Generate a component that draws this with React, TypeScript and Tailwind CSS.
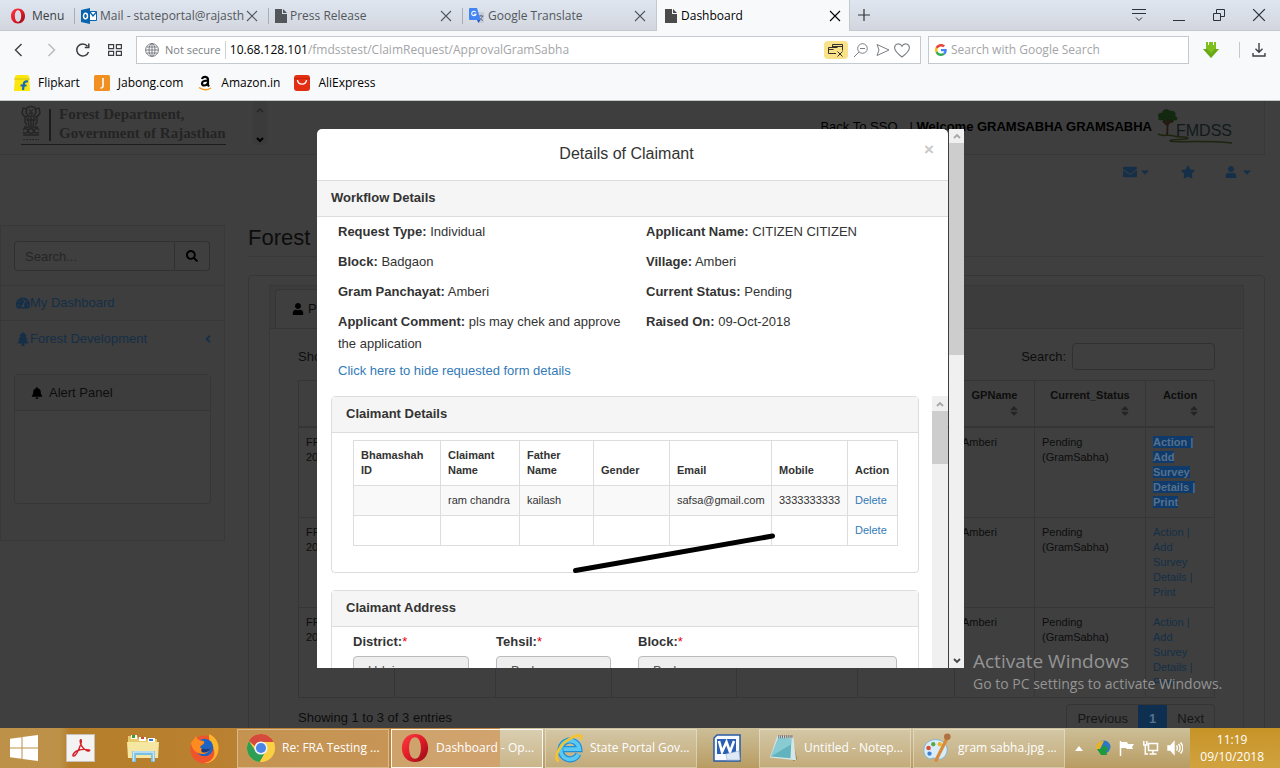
import React from "react";
import {
  FaSearch,
  FaTachometerAlt,
  FaTree,
  FaBell,
  FaUser,
  FaEnvelope,
  FaStar,
  FaCaretDown,
  FaAngleLeft,
  FaSort,
} from "react-icons/fa";

const uiFont = "font-['Open_Sans','Noto_Sans',sans-serif]";
const pageFont = "font-['Liberation_Sans',Arial,sans-serif]";

/* ---------- small drawings ---------- */

function OperaLogo({ className }: { className: string }) {
  return (
    <svg viewBox="0 0 32 32" className={className} aria-hidden="true">
      <defs>
        <linearGradient id="opera" x1="0" y1="0" x2="1" y2="1">
          <stop offset="0" stopColor="#ff3b42" />
          <stop offset="0.5" stopColor="#e01b28" />
          <stop offset="1" stopColor="#8e0a15" />
        </linearGradient>
      </defs>
      <path
        fill="url(#opera)"
        fillRule="evenodd"
        d="M16 1C7.500 1 2 7.500 2 16s5.500 15 14 15 14-6.500 14-15S24.500 1 16 1Zm0 3.500c4 0 6.300 5 6.300 11.500S20 27.500 16 27.500 9.700 22.500 9.700 16 12 4.500 16 4.500Z"
      />
    </svg>
  );
}

function PageIcon({ className }: { className: string }) {
  return (
    <svg viewBox="0 0 12 14" className={className} aria-hidden="true">
      <path fill="currentColor" d="M0 0h7v5h5v9H0zM8 0l4 4H8z" />
    </svg>
  );
}

function Cross({ className }: { className: string }) {
  return (
    <svg viewBox="0 0 12 12" className={className} aria-hidden="true">
      <path d="M1 1l10 10M11 1L1 11" stroke="currentColor" strokeWidth="1.100" fill="none" />
    </svg>
  );
}

function OutlookIcon() {
  return (
    <svg viewBox="0 0 16 16" className="size-4 shrink-0" aria-hidden="true">
      <path fill="#fff" stroke="#0a64ad" d="M8.500 3.500h7v9h-7z" />
      <path d="M9 4l3 4 3.500-4" stroke="#0a64ad" strokeWidth="1.400" fill="none" />
      <path fill="#0a64ad" d="M0 2l9-2v16l-9-2z" />
      <ellipse cx="4.500" cy="8" rx="2" ry="2.700" fill="none" stroke="#fff" strokeWidth="1.400" />
    </svg>
  );
}

function TranslateIcon() {
  return (
    <svg viewBox="0 0 16 16" className="size-4 shrink-0" aria-hidden="true">
      <path fill="#c9ced8" d="M6 4h9v11H9z" />
      <path d="M9.500 8h5M12 6.800V8M13.500 8c-.5 2-2 3.500-3.500 4.500M10.500 9.500c.7 1.300 2 2.500 3.500 3" stroke="#5f6b80" fill="none" />
      <path fill="#4285f4" d="M1 0h7l3.500 12H1a1 1 0 0 1-1-1V1a1 1 0 0 1 1-1z" />
      <path fill="#2a56c6" d="M8 12h3.500L9.500 15z" />
      <path d="M6.800 4.300A2.200 2.200 0 1 0 7 6.200H4.900" stroke="#fff" strokeWidth="1.100" fill="none" />
    </svg>
  );
}

function GoogleG() {
  return (
    <svg viewBox="0 0 48 48" className="size-3 shrink-0" aria-hidden="true">
      <path fill="#EA4335" d="M24 9.500c3.540 0 6.710 1.220 9.210 3.600l6.850-6.850C35.900 2.380 30.470 0 24 0 14.620 0 6.510 5.380 2.560 13.220l7.980 6.190C12.430 13.720 17.740 9.500 24 9.500z" />
      <path fill="#4285F4" d="M46.980 24.550c0-1.570-.15-3.090-.38-4.550H24v9.020h12.940c-.58 2.960-2.260 5.480-4.780 7.180l7.730 6c4.510-4.180 7.090-10.360 7.090-17.650z" />
      <path fill="#FBBC05" d="M10.530 28.590c-.48-1.450-.76-2.990-.76-4.590s.27-3.140.76-4.590l-7.980-6.190C.92 16.460 0 20.120 0 24s.92 7.540 2.560 10.780l7.970-6.190z" />
      <path fill="#34A853" d="M24 48c6.480 0 11.930-2.130 15.890-5.810l-7.730-6c-2.150 1.450-4.920 2.300-8.160 2.300-6.260 0-11.570-4.220-13.470-9.910l-7.980 6.190C6.510 42.620 14.620 48 24 48z" />
    </svg>
  );
}

function Emblem() {
  return (
    <svg viewBox="0 0 20 36" className="h-9 w-5" aria-hidden="true">
      <g fill="none" stroke="#242424" strokeWidth="1.400">
        <path d="M6 3c1-2 7-2 8 0l1 4-2 4H7L5 7z" />
        <path d="M8 5h1M11 5h1M8 8c1 1 3 1 4 0M10 5v3" />
        <path d="M6 4L2 3 1 8l2 3 3 1M14 4l4-1 1 5-2 3-3 1" />
        <path d="M4 12v5l2 3M16 12v5l-2 3M7 12l1 9M13 12l-1 9M10 12v9M5 15h10" />
        <path d="M3 22h14M2 25c2-3 5-1 5 1s-4 3-5 1M18 25c-2-3-5-1-5 1s4 3 5 1M2 30h16" />
        <circle cx="10" cy="26" r="2.500" />
      </g>
      <path d="M2 34.500h16" stroke="#262626" strokeDasharray="2 1" />
    </svg>
  );
}

function FmdssLogo() {
  return (
    <svg viewBox="0 0 78 36" className="h-9 w-20" role="img" aria-label="FMDSS">
      <path fill="#12280f" d="M2 9C-1 6 3 3 5 4c0-4 6-5 8-2 4-1 7 2 5 5 4 1 2 6-1 4 0 4-4 3-5 1-3 3-7 1-6-1-4 1-6-1-4-2z" />
      <path d="M11 10c-1 6 0 10-1 16M10 16l-4-4M11 15l4-4" stroke="#24180f" strokeWidth="1.800" fill="none" />
      <path d="M1 25c5 3 10 0 16 2s12 0 14 2-20 1-18 3 30-1 62 2" stroke="#1d2410" strokeWidth="1.500" fill="none" />
      <text x="19" y="27" fontSize="16" fill="#101a1a" fontFamily="Liberation Sans, Arial, sans-serif">
        FMDSS
      </text>
    </svg>
  );
}

/* ---------- browser window ---------- */

function BrowserTab({ icon, title, active }: { icon: React.ReactNode; title: string; active?: boolean }) {
  return (
    <div
      className={
        active
          ? "flex h-[31px] w-[194px] items-center gap-1 border-x border-[#c3c9ce] bg-[#f8f9fb] pl-2 pr-2 pt-px text-black"
          : "flex h-[31px] w-[194px] items-center pr-2.5 text-[#53575c]"
      }
    >
      {!active && <span className="mr-1.5 h-4 w-px shrink-0 bg-[#a9aeb5]" />}
      {icon}
      <span className={active ? "flex-1 truncate" : "ml-[3px] flex-1 whitespace-nowrap"}>{title}</span>
      <button type="button" aria-label="Close tab" className="shrink-0">
        <Cross className="size-3" />
      </button>
    </div>
  );
}

function TabStrip() {
  return (
    <div className="flex h-[31px] shrink-0 items-stretch border-b border-[#c3c9ce] bg-linear-to-b from-[#dfe6ef] to-[#d2d7df]">
      <button type="button" className="flex w-[74px] shrink-0 items-center gap-1.5 pl-2.5 pt-px text-[#3b3f45]">
        <OperaLogo className="size-4" />
        Menu
      </button>
      <BrowserTab icon={<OutlookIcon />} title="Mail - stateportal@rajasth" />
      <BrowserTab icon={<PageIcon className="h-3.5 w-3 shrink-0" />} title="Press Release" />
      <BrowserTab icon={<TranslateIcon />} title="Google Translate" />
      <BrowserTab active icon={<PageIcon className="h-3.5 w-3 shrink-0 text-[#4b4b4b]" />} title="Dashboard" />
      <button type="button" aria-label="New tab" className="ml-1 self-center p-1 text-[#333]">
        <svg viewBox="0 0 12 12" className="size-3">
          <path d="M6 0v12M0 6h12" stroke="currentColor" strokeWidth="1.200" />
        </svg>
      </button>
      <div className="ml-auto flex items-center gap-[26px] pr-3.5 text-[#2d3138]">
        <button type="button" aria-label="Tab menu">
          <svg viewBox="0 0 14 14" className="size-3.5" fill="none" stroke="currentColor">
            <path d="M0 1.500h14M0 5.500h14M4 9.500l3 3 3-3" />
          </svg>
        </button>
        <button type="button" aria-label="Minimise">
          <svg viewBox="0 0 14 14" className="size-3.5" fill="none" stroke="currentColor">
            <path d="M1 12.500h12" />
          </svg>
        </button>
        <button type="button" aria-label="Restore">
          <svg viewBox="0 0 14 14" className="size-3.5" fill="none" stroke="currentColor">
            <path d="M1.500 5.500h7v7h-7zM4.500 5.500v-4h8v7h-4" />
          </svg>
        </button>
        <button type="button" aria-label="Close">
          <Cross className="size-3.5" />
        </button>
      </div>
    </div>
  );
}

function AddressRow() {
  return (
    <div className="flex h-[38px] shrink-0 items-center bg-[#f8f9fb] text-[#3b3f45]">
      <div className="flex w-[136px] shrink-0 items-center gap-[18px] pl-3">
        <button type="button" aria-label="Back">
          <svg viewBox="0 0 14 14" className="size-3.5" fill="none" stroke="currentColor" strokeWidth="1.400">
            <path d="M9.500 1l-6 6 6 6" />
          </svg>
        </button>
        <button type="button" aria-label="Forward" className="text-[#b4b8bd]">
          <svg viewBox="0 0 14 14" className="size-3.5" fill="none" stroke="currentColor" strokeWidth="1.400">
            <path d="M4.500 1l6 6-6 6" />
          </svg>
        </button>
        <button type="button" aria-label="Reload">
          <svg viewBox="0 0 14 14" className="size-3.5" fill="none" stroke="currentColor" strokeWidth="1.500">
            <path d="M12.500 9A6 6 0 1 1 11.500 3.200M12.800.5v4H8.800" />
          </svg>
        </button>
        <button type="button" aria-label="Speed dial">
          <svg viewBox="0 0 14 12" className="h-3 w-3.5" fill="none" stroke="currentColor" strokeWidth="1.200">
            <path d="M.6.6h5v4h-5zM8.400.6h5v4h-5zM.6 7.400h5v4h-5zM8.400 7.400h5v4h-5z" />
          </svg>
        </button>
      </div>
      <div className="flex h-7 min-w-0 flex-1 items-center border border-[#c3c9ce] bg-white pl-2 pr-2.5 text-[#7b7f84]">
        <svg viewBox="0 0 14 14" className="size-3.5 shrink-0" fill="none" stroke="currentColor">
          <circle cx="7" cy="7" r="6.400" />
          <ellipse cx="7" cy="7" rx="3" ry="6.400" />
          <path d="M.6 7h12.800M7 .6v12.800M1.500 4h11M1.500 10h11" />
        </svg>
        <span className="ml-1.5 shrink-0 text-[11px]">Not secure</span>
        <span className="mx-1 h-[18px] w-px bg-[#cfd2d6]" />
        <span className="min-w-0 flex-1 truncate text-[12px] text-[#a3a5a8]">
          <span className="text-black">10.68.128.101</span>/fmdsstest/ClaimRequest/ApprovalGramSabha
        </span>
        <button type="button" aria-label="Pop-up blocked" className="flex h-[18px] w-6 items-center justify-center rounded-sm bg-[#f9e287] text-[#33312a]">
          <svg viewBox="0 0 16 14" className="h-3.5 w-4" fill="none" stroke="currentColor">
            <path d="M4.500 4.500v-3h10v6M4.500 3.500h10M8 10.500H.5v-6h9M.5 6.500h5M9.500 8.500l5 5M14.500 8.500l-5 5" />
          </svg>
        </button>
        <button type="button" aria-label="Zoom" className="ml-1.5">
          <svg viewBox="0 0 14 14" className="size-3.5" fill="none" stroke="currentColor">
            <circle cx="8.500" cy="5.500" r="4.800" />
            <path d="M5 9l-5 5M6 5.500h5" />
          </svg>
        </button>
        <button type="button" aria-label="Send" className="ml-2">
          <svg viewBox="0 0 14 14" className="size-3.5" fill="none" stroke="currentColor">
            <path d="M1 1.500l12 5.500-12 5.500L3 7z" />
          </svg>
        </button>
        <button type="button" aria-label="Bookmark" className="ml-1">
          <svg viewBox="0 0 16 15" className="h-[15px] w-4" fill="none" stroke="currentColor" strokeWidth="1.100">
            <path d="M8 14C4 11 .6 8 .6 4.800.6.500 6-.7 8 3.300 10-.7 15.400.500 15.400 4.800 15.400 8 12 11 8 14z" />
          </svg>
        </button>
      </div>
      <label className="ml-[7px] flex h-7 w-[261px] items-center gap-1 border border-[#c3c9ce] bg-white pl-1.5">
        <GoogleG />
        <input
          type="search"
          aria-label="Search with Google Search"
          placeholder="Search with Google Search"
          className="min-w-0 flex-1 bg-transparent text-[12px] outline-none placeholder:text-[#a3a5a8]"
        />
      </label>
      <button type="button" aria-label="Download helper" className="ml-3.5">
        <svg viewBox="0 0 16 16" className="size-4">
          <path fill="#7fbf1d" d="M3 0h10v7h3l-8 9-8-9h3z" />
          <path fill="#4f8d12" d="M8 16l-8-9h4l4 4 4-4h4z" opacity=".45" />
          <path d="M5.500 0v3M10.500 0v3" stroke="#fff" strokeWidth="1" />
        </svg>
      </button>
      <span className="ml-5 h-4 w-px bg-[#c3c9ce]" />
      <button type="button" aria-label="Downloads" className="ml-3 mr-3.5">
        <svg viewBox="0 0 14 14" className="size-3.5" fill="none" stroke="currentColor" strokeWidth="1.400">
          <path d="M7 0v9M3.500 5.800L7 9.300l3.500-3.500M1 10v3h12v-3" />
        </svg>
      </button>
    </div>
  );
}

function BookmarkBar() {
  return (
    <nav className="flex h-8 shrink-0 items-center gap-3.5 border-b border-[#c3cac6] bg-[#f8f9fb] pb-[3px] pl-3.5 text-black">
      <a href="#" className="flex items-center gap-2">
        <svg viewBox="0 0 16 16" className="size-4">
          <path fill="#fbe60e" d="M1 1l2-1h10l2 1 1 15H0z" />
          <path d="M0 4h16" stroke="#cdb910" strokeWidth=".8" />
          <path d="M14 6.500c-3-.5-4 .5-4.300 3L9 15M6.500 10.500h6" stroke="#1269b8" strokeWidth="2.200" fill="none" />
        </svg>
        Flipkart
      </a>
      <a href="#" className="flex items-center gap-2">
        <svg viewBox="0 0 16 16" className="size-4">
          <rect width="16" height="16" rx="1.500" fill="#f19021" />
          <path d="M9 3v8c0 2-1 2-2.500 2" stroke="#fff" strokeWidth="1.600" fill="none" />
        </svg>
        Jabong.com
      </a>
      <a href="#" className="flex items-center gap-2">
        <svg viewBox="0 0 16 16" className="size-4">
          <path d="M5 4c1-3 6-3 6 1v5l1 1.500M11 5.500c-3 0-6 .5-6 3s4 3 6-.5" stroke="#000" strokeWidth="2.200" fill="none" />
          <path d="M2 12.500c4 3 8 3 12 .500" stroke="#f6991d" strokeWidth="1.400" fill="none" />
        </svg>
        Amazon.in
      </a>
      <a href="#" className="flex items-center gap-2">
        <svg viewBox="0 0 16 16" className="size-4">
          <rect width="16" height="16" rx="3" fill="#e22f13" />
          <path fill="#c7230b" d="M0 3h16v1H0z" />
          <path d="M3.500 5c.5 5.500 8.500 5.500 9 0" stroke="#fff" strokeWidth="1.400" fill="none" />
        </svg>
        AliExpress
      </a>
    </nav>
  );
}

/* ---------- dimmed page ---------- */

function Sidebar() {
  return (
    <aside className="w-[225px] shrink-0 self-start border border-[#383838] bg-[#3e3e3e] pb-9">
      <div className="flex px-[13px] pb-3.5 pt-[15px]">
        <input
          aria-label="Search"
          placeholder="Search..."
          className="h-[30px] w-[161px] rounded-l-sm border border-[#303030] bg-[#3f3f3f] px-2.5 placeholder:text-[#262626]"
        />
        <button type="button" aria-label="Search" className="flex h-[30px] w-[35px] items-center justify-center rounded-r-sm border border-l-0 border-[#303030] bg-[#3f3f3f] text-black">
          <FaSearch className="size-3" />
        </button>
      </div>
      <a href="#" className="flex h-[36px] items-center border-y border-[#383838] pl-[15px] text-[#142f47]">
        <FaTachometerAlt className="size-3.5" />
        My Dashboard
      </a>
      <a href="#" className="flex h-[35px] items-center pl-[15px] text-[#142f47]">
        <FaTree className="size-3.5" />
        Forest Development
        <FaAngleLeft className="ml-auto mr-2.5 size-3" />
      </a>
      <section className="mx-[13px] mt-[18px] h-[130px] rounded-sm border border-[#363636] bg-[#3f3f3f]">
        <h2 className="flex h-9 items-center gap-1.5 border-b border-[#363636] bg-[#3d3d3d] pl-4 text-[#0d0d0d]">
          <FaBell className="size-3 text-black" />
          Alert Panel
        </h2>
      </section>
    </aside>
  );
}

const headers = [
  { label: "Request ID", width: "w-[96px] pt-[22px]" },
  { label: "", width: "w-[101px]" },
  { label: "", width: "w-[116px]" },
  { label: "", width: "w-[125px]" },
  { label: "", width: "w-[121px]" },
  { label: "", width: "w-[97px]" },
  { label: "GPName", width: "w-[80px] pt-[7px]" },
  { label: "Current_Status", width: "w-[111px] pt-[7px]" },
  { label: "Action", width: "w-[69px] pt-[7px]" },
];

function ActionLinks({ selected }: { selected: boolean }) {
  const cls = selected ? "bg-[#0e3b6b] font-bold text-[#56708c]" : "text-[#142f47]";
  return (
    <>
      <span className={cls}>
        <a href="#">Action</a> |{" "}
      </span>
      <br />
      <a href="#" className={cls}>
        Add{" "}
        <br />
        Survey
        <br />
        Details
      </a>
      <span className={cls}> |</span>
      <br />
      <a href="#" className={cls}>
        Print
      </a>
    </>
  );
}

function RequestTable() {
  return (
    <table className="w-full table-fixed border-collapse text-[11px] leading-[15px] text-[#0d0d0d]">
      <thead>
        <tr className="h-[46px]">
          {headers.map((h, i) => (
            <th key={i} className={h.width + " border border-b-2 border-[#353535] px-1 align-top"}>
              {h.label}
              {i > 5 && <FaSort className="ml-auto mr-2.5 mt-0.5 size-3 text-[#242424]" />}
            </th>
          ))}
        </tr>
      </thead>
      <tbody>
        {[0, 1, 2].map((r) => (
          <tr key={r} className="h-[90px] align-top">
            <td className="border border-[#363636] px-[7px] pt-[7px]">
              FRA/
              <br />
              2018
            </td>
            {[1, 2, 3, 4, 5].map((c) => (
              <td key={c} className="border border-[#363636]" />
            ))}
            <td className="border border-[#363636] px-[7px] pt-[7px]">Amberi</td>
            <td className="border border-[#363636] px-[7px] pt-[7px]">Pending (GramSabha)</td>
            <td className="border border-[#363636] py-[7px] pl-[7px]">
              <ActionLinks selected={r === 0} />
            </td>
          </tr>
        ))}
      </tbody>
    </table>
  );
}

function DimmedPage() {
  return (
    <div className="absolute inset-0 overflow-hidden bg-[#3f3f3f] pr-[15px]">
      <header className="flex h-[54px] items-start border-b border-r border-[#383838] bg-[#3e3e3e] pl-[21px]">
        <div className="mt-1 flex h-10 w-[205px] shrink-0 items-start gap-2 border-b border-[#1c1c1c] font-['Liberation_Serif','Times_New_Roman',serif] text-[15px] leading-[19px] text-[#242424]">
          <Emblem />
          <span className="mt-1 h-8 w-0.5 shrink-0 bg-[#1c1c1c]" />
          <span className="font-bold whitespace-nowrap">
            Forest Department,
            <br />
            Government of Rajasthan
          </span>
        </div>
        <div className="ml-[27px] flex h-11 w-3.5 flex-col items-center justify-between bg-[#3b3b3b] pb-0.5 pt-1.5 text-black">
          <svg viewBox="0 0 8 6" className="w-2 text-[#262626]" fill="none" stroke="currentColor" strokeWidth="1.500"><path d="M1 5l3-3 3 3" /></svg>
          <svg viewBox="0 0 8 6" className="w-2" fill="none" stroke="currentColor" strokeWidth="2"><path d="M1 1l3 3 3-3" /></svg>
        </div>
        <div className="ml-auto flex h-[52px] items-center pr-7 text-black">
          <a href="#">Back To SSO</a>
          <span className="ml-3 font-bold"><span className="font-normal">|</span> Welcome GRAMSABHA GRAMSABHA</span>
          <span className="ml-1"><FmdssLogo /></span>
        </div>
      </header>
      <nav className="flex h-[33px] items-center justify-end gap-[30px] pr-3 text-[#142f47]">
        <button type="button" aria-label="Messages" className="flex items-center gap-0.5">
          <FaEnvelope className="size-3.5" />
          <FaCaretDown className="size-3" />
        </button>
        <button type="button" aria-label="Favourites"><FaStar className="size-3.5" /></button>
        <button type="button" aria-label="Account" className="flex items-center gap-1">
          <FaUser className="size-3" />
          <FaCaretDown className="size-3" />
        </button>
      </nav>
      <div className="mt-[37px] flex gap-[23px]">
        <Sidebar />
        <main className="min-w-0 flex-1">
          <h1 className="h-8 border-b border-[#383838] text-[22px] leading-[26px] text-[#0d0d0d]">Forest</h1>
          <section className="mt-[18px] h-[500px] rounded-sm border border-[#363636] px-5 pt-[9px]">
            <div className="h-full border border-[#383838]">
              <div className="flex h-[43px] items-end border-b border-[#363636] bg-[#3c3c3c] pl-[5px]">
                <button type="button" className="flex h-[39px] items-center gap-1 rounded-t-sm border border-b-0 border-[#363636] bg-[#3f3f3f] px-4 text-[#0d0d0d]">
                  <FaUser className="size-3 text-black" /> Pending
                </button>
              </div>
              <div className="px-7 pt-3.5 text-[#0d0d0d]">
                <div className="flex h-[27px] items-center">
                  <span>Show</span>
                  <label htmlFor="grid-search" className="ml-auto mr-1.5">Search:</label>
                  <input id="grid-search" className="h-[27px] w-[143px] rounded-sm border border-[#303030]" />
                </div>
                <div className="mt-2.5"><RequestTable /></div>
                <div className="mt-1.5 flex items-start">
                  <span className="mt-1">Showing 1 to 3 of 3 entries</span>
                  <div className="ml-auto flex h-[30px] items-center rounded-sm border border-[#343434]">
                    <button type="button" className="px-2.5 text-[#161616]">Previous</button>
                    <button type="button" className="h-full bg-[#0e2f50] px-[11px] font-bold text-[#56708c]">1</button>
                    <button type="button" className="px-2.5 text-[#161616]">Next</button>
                  </div>
                </div>
              </div>
            </div>
          </section>
        </main>
      </div>
    </div>
  );
}

/* ---------- claimant dialog ---------- */

function Arrow({ up, className }: { up?: boolean; className: string }) {
  return (
    <svg viewBox="0 0 8 6" className={className} fill="none" stroke="currentColor" strokeWidth="1.800" aria-hidden="true">
      <path d={up ? "M1 5l3-3 3 3" : "M1 1l3 3 3-3"} />
    </svg>
  );
}

function Fact({ label, value }: { label: string; value: string }) {
  return (
    <p className="pr-2">
      <b>{label}:</b> {value}
    </p>
  );
}

const cell = "border border-[#ddd] px-[7px] py-[7px]";

function ClaimantTable() {
  return (
    <table className="w-full table-fixed border-collapse text-left text-[11px] leading-[15px]">
      <thead>
        <tr className="align-bottom">
          <th className={cell + " w-[87px]"}>Bhamashah ID</th>
          <th className={cell + " w-[79px]"}>Claimant Name</th>
          <th className={cell + " w-[74px]"}>Father Name</th>
          <th className={cell + " w-[76px]"}>Gender</th>
          <th className={cell + " w-[102px]"}>Email</th>
          <th className={cell + " w-[76px]"}>Mobile</th>
          <th className={cell + " w-[50px]"}>Action</th>
        </tr>
      </thead>
      <tbody>
        <tr className="bg-[#f9f9f9]">
          <td className={cell} />
          <td className={cell + " whitespace-nowrap"}>ram chandra</td>
          <td className={cell}>kailash</td>
          <td className={cell} />
          <td className={cell + " whitespace-nowrap"}>safsa@gmail.com</td>
          <td className={cell}>3333333333</td>
          <td className={cell}><a href="#" className="text-[#337ab7]">Delete</a></td>
        </tr>
        <tr>
          <td className={cell} />
          <td className={cell} />
          <td className={cell} />
          <td className={cell} />
          <td className={cell} />
          <td className={cell} />
          <td className={cell}><a href="#" className="text-[#337ab7]">Delete</a></td>
        </tr>
      </tbody>
    </table>
  );
}

function SelectField({ id, label, value }: { id: string; label: string; value: string }) {
  return (
    <div>
      <label htmlFor={id} className="block h-[22px] font-bold leading-[22px]">
        {label}:<span className="font-normal text-red-600">*</span>
      </label>
      <div className="mt-[3px] grid">
        <select id={id} className="col-start-1 row-start-1 h-[31px] appearance-none rounded-sm border border-[#bbb] bg-[#eee] px-3.5 pb-0.5 text-[#555]">
          <option>{value}</option>
        </select>
        <Arrow className="pointer-events-none col-start-1 row-start-1 mr-1.5 w-2 self-center justify-self-end pb-0.5 text-[#555]" />
      </div>
    </div>
  );
}

function ClaimantDialog() {
  return (
    <div className="absolute inset-0 flex justify-center pb-[60px] pt-7">
      <div className="flex min-h-0 w-[648px] gap-px pl-px">
        <div role="dialog" aria-label="Details of Claimant" className="flex min-w-0 flex-1 flex-col overflow-hidden rounded-t-[5px] bg-white text-[#333]">
          <header className="relative h-[51px] shrink-0">
            <h2 className="pt-3.5 pr-3 text-center text-[16px] leading-[22px]">Details of Claimant</h2>
            <button type="button" aria-label="Close" className="absolute right-3.5 top-2.5 text-[17px] font-bold leading-[22px] text-[#c9c9c9]">×</button>
          </header>
          <h3 className="flex h-[37px] shrink-0 items-center border-y border-[#ddd] bg-[#f5f5f5] pb-0.5 pl-3.5 font-bold">Workflow Details</h3>
          <div className="shrink-0 pb-3.5 pl-[21px] pt-1 leading-[22px]">
            <div className="grid grid-cols-[308px_1fr] gap-y-2">
              <Fact label="Request Type" value="Individual" />
              <Fact label="Applicant Name" value="CITIZEN CITIZEN" />
              <Fact label="Block" value="Badgaon" />
              <Fact label="Village" value="Amberi" />
              <Fact label="Gram Panchayat" value="Amberi" />
              <Fact label="Current Status" value="Pending" />
              <Fact label="Applicant Comment" value="pls may chek and approve the application" />
              <Fact label="Raised On" value="09-Oct-2018" />
            </div>
            <a href="#" className="mt-[5px] block text-[#337ab7]">Click here to hide requested form details</a>
          </div>
          <div className="flex min-h-0 flex-1">
            <div className="min-w-0 flex-1 overflow-hidden pl-3.5 pr-[13px]">
              <section className="rounded-sm border border-[#ddd]">
                <h3 className="flex h-9 items-center border-b border-[#ddd] bg-[#f5f5f5] pb-0.5 pl-3.5 font-bold">Claimant Details</h3>
                <div className="px-[21px] pb-[26px] pt-[7px]"><ClaimantTable /></div>
              </section>
              <section className="mt-[17px] rounded-sm border border-[#ddd]">
                <h3 className="flex h-9 items-center border-b border-[#ddd] bg-[#f5f5f5] pb-0.5 pl-3.5 font-bold">Claimant Address</h3>
                <div className="grid grid-cols-[116px_115px_1fr] gap-x-[27px] px-[21px] pb-6 pt-1">
                  <SelectField id="district" label="District" value="Udaipur" />
                  <SelectField id="tehsil" label="Tehsil" value="Badgaon" />
                  <SelectField id="block" label="Block" value="Badgaon" />
                </div>
              </section>
            </div>
            <div className="w-4 shrink-0 bg-[#f0f0f0]">
              <div className="flex h-[15px] items-center justify-center text-[#a8a8a8]"><Arrow up className="w-2" /></div>
              <div className="h-[53px] bg-[#cdcdcd]" />
            </div>
          </div>
        </div>
        <div className="flex w-[15px] shrink-0 flex-col bg-[#f0f0f0]">
          <div className="flex h-3.5 items-center justify-center text-[#a8a8a8]"><Arrow up className="w-2" /></div>
          <div className="h-[212px] bg-[#cdcdcd]" />
          <div className="mt-auto flex h-[15px] items-center justify-center text-[#444]"><Arrow className="w-2" /></div>
        </div>
      </div>
      <svg viewBox="0 0 204 42" className="absolute left-[572px] top-[430px] h-[42px] w-[204px]" aria-hidden="true">
        <path d="M3.500 39.500L200.500 5" stroke="#000" strokeWidth="5" strokeLinecap="round" />
      </svg>
    </div>
  );
}

/* ---------- task bar ---------- */

function TaskButton({ icon, title, active }: { icon: React.ReactNode; title: string; active?: boolean }) {
  return (
    <button
      type="button"
      className={
        active
          ? "flex h-[39px] w-[152px] items-center gap-1.5 border border-white/90 bg-white/25 pl-2"
          : "flex h-[39px] w-[152px] items-center gap-1.5 border border-white/35 bg-white/15 pl-2"
      }
    >
      {icon}
      <span className="truncate">{title}</span>
    </button>
  );
}

function ChromeIcon() {
  return (
    <svg viewBox="0 0 32 32" className="size-[30px] shrink-0" aria-hidden="true">
      <circle cx="16" cy="16" r="15" fill="#fbd043" />
      <path fill="#d64a3d" d="M3 8.500A15 15 0 0 1 29.500 9.500H16a7 7 0 0 0-6.500 4.500z" />
      <path fill="#2f9e55" d="M3 8.500A15 15 0 0 0 14.500 31l6-10.500A7 7 0 0 1 10 19z" />
      <circle cx="16" cy="16" r="7" fill="#f3f3f3" />
      <circle cx="16" cy="16" r="5.400" fill="#4a86e8" />
    </svg>
  );
}

function IeIcon() {
  return (
    <svg viewBox="0 0 32 32" className="size-[30px] shrink-0" aria-hidden="true">
      <path d="M26 22.500a10 10 0 1 1 1-5.300H10" stroke="#1d8fd6" strokeWidth="6.500" fill="none" />
      <path d="M26 22.500a10 10 0 1 1 1-5.300H10" stroke="#5cc9f5" strokeWidth="4" fill="none" />
      <path d="M5 30C-1 28 5 14 14 8S31 0 29 7" stroke="#f5c32c" strokeWidth="2.800" fill="none" />
    </svg>
  );
}

function NotepadIcon() {
  return (
    <svg viewBox="0 0 32 32" className="size-[30px] shrink-0" aria-hidden="true">
      <path fill="#8f7a4a" d="M26 6l5 22-4 2z" />
      <path fill="#d5e6e8" d="M10 3l17 1 3 25L2 26z" />
      <path fill="#62b3bd" d="M11 5l14 1-1 21-21-2z" />
      <path fill="#a4dbe0" d="M11 5l14 1v6L3 25z" opacity=".6" />
      <path d="M11 4h16" stroke="#666" strokeWidth="3" strokeDasharray="1 1" />
    </svg>
  );
}

function PaintIcon() {
  return (
    <svg viewBox="0 0 32 32" className="size-[30px] shrink-0" aria-hidden="true">
      <path fill="#d9edf8" stroke="#7fb2cf" d="M2 17C3 9 12 5 20 8s9 13 3 18-9-1-12 1S1 25 2 17z" />
      <circle cx="7" cy="16" r="2.500" fill="#d8503c" />
      <circle cx="12" cy="12" r="2.300" fill="#57a845" />
      <circle cx="19" cy="12" r="2.300" fill="#f0b429" />
      <circle cx="8" cy="22" r="2.300" fill="#3f7fd0" />
      <path d="M26 7L15 29" stroke="#d98b3c" strokeWidth="3.500" strokeLinecap="round" />
      <circle cx="27" cy="4" r="3.500" fill="#b0703f" />
    </svg>
  );
}

function Taskbar() {
  return (
    <footer className="relative flex h-10 shrink-0 items-center overflow-hidden text-white">
      <div className="absolute inset-0 flex" aria-hidden="true">
        <div className="w-[500px] bg-linear-to-r from-[#bd9148] from-12% via-[#b57e28] via-14% to-[#c1853f]" />
        <div className="flex-1 bg-linear-to-b from-[#cdbf98] to-[#b89c62]" />
        <div className="w-[90px] bg-linear-to-b from-[#c69326] to-[#d1a33f]" />
      </div>
      <div className="relative flex w-full items-center">
        <button type="button" aria-label="Start" className="w-[66px] pl-2.5">
          <svg viewBox="0 0 28 26" className="h-[26px] w-7">
            <path fill="#fff" d="M0 3.800L11.500 2.200v10.300H0zM12.500 2L28 0v12.500H12.500zM0 13.500h11.500v10.300L0 22.200zM12.500 13.500H28V26l-15.500-2z" />
          </svg>
        </button>
        <button type="button" aria-label="Acrobat Reader" className="flex h-7 w-[29px] items-center justify-center border border-[#c8c0b4] bg-[#f3f3f3]">
          <svg viewBox="0 0 22 22" className="size-5" fill="none" stroke="#d3202a" strokeWidth="1.500">
            <path d="M2 19c1-4 8-8 18-6 2 1-1 2-3 1C13 12 10 7 10 3c1-3 2 0 1 3C9 12 6 19 3 20c-1 0-1-.5-1-1z" />
          </svg>
        </button>
        <button type="button" aria-label="File Explorer" className="ml-8">
          <svg viewBox="0 0 32 30" className="h-[30px] w-8">
            <path fill="#e6c968" d="M1 3h9l2 3h18v18H1z" />
            <path fill="#fff" d="M4 2h6v4H4zM12 4h7v4h-7zM21 5h7v4h-7z" />
            <path fill="#3f9b3b" d="M5 2h3v3H5z" />
            <path fill="#cf4a3a" d="M14 4h3v2h-3z" />
            <path fill="#3d78c8" d="M22 6h4v2h-4z" />
            <path fill="#f5e6a2" d="M0 9h32l-1 16H1z" />
            <path fill="none" stroke="#79bfe4" strokeWidth="4" d="M7 29v-9h19v9" />
            <path fill="none" stroke="#c8e8f8" strokeWidth="1.500" d="M6.500 28v-9h20v9" />
          </svg>
        </button>
        <button type="button" aria-label="Firefox" className="ml-[30px]">
          <svg viewBox="0 0 32 32" className="size-[31px]">
            <circle cx="16" cy="17" r="14.500" fill="#f0542d" />
            <path fill="#ffb52b" d="M21 1c8 4 11 12 9 19S22 32 15 31c9-1 12-7 11-13s-7-9-5-17z" />
            <circle cx="16" cy="15" r="9" fill="#1d63c4" />
            <path fill="#ff8a1f" d="M2 10c2-3 4-4 5-7 1 3 3 4 6 5 3 0 4 2 1 4-3 1-3 3-1 4 4 2 6 1 9-1-1 6-7 8-12 6S3 15 2 10z" />
            <path fill="#143d85" d="M14 20c5 1 8-2 8-5-2 2-5 2-7 1-3 0-3 3-1 4z" />
          </svg>
        </button>
        <div className="ml-[17px] flex items-center gap-0.5">
          <TaskButton icon={<ChromeIcon />} title="Re: FRA Testing ..." />
          <TaskButton active icon={<OperaLogo className="size-[30px] shrink-0" />} title="Dashboard - Op..." />
          <TaskButton icon={<IeIcon />} title="State Portal Gov..." />
        </div>
        <button type="button" aria-label="Word" className="ml-4 mr-[18px]">
          <svg viewBox="0 0 28 28" className="size-7">
            <path fill="#f6f9fd" stroke="#2a5aa5" strokeWidth="1.500" d="M4 1h23v26H1V4z" />
            <path fill="#2b5fb3" d="M4 5h19v15H4z" />
            <path d="M6 7l3 11 4.500-10L17 18l4-11" stroke="#fff" strokeWidth="2.600" fill="none" />
            <path fill="#dfe9f6" stroke="#9ab4d8" strokeWidth=".6" d="M13 20l13-3 1 9H14z" />
          </svg>
        </button>
        <div className="flex items-center gap-0.5">
          <TaskButton icon={<NotepadIcon />} title="Untitled - Notep..." />
          <TaskButton icon={<PaintIcon />} title="gram sabha.jpg ..." />
        </div>
        <div className="ml-2.5 flex items-center gap-2">
          <svg viewBox="0 0 8 5" className="h-[5px] w-2" aria-hidden="true"><path fill="#fff" d="M4 0l4 5H0z" /></svg>
          <svg viewBox="0 0 16 16" className="ml-1 size-4" aria-hidden="true">
            <circle cx="9" cy="7" r="6.500" fill="#2b78c9" />
            <path fill="#e4b52c" d="M1 5c3-4 6-4 8-4L5 9H1z" />
            <path fill="#1e9a3a" d="M9 5l5 4-3 1 1 5H6L2 9h4z" />
          </svg>
          <svg viewBox="0 0 16 16" className="size-4" aria-hidden="true">
            <path d="M1.500 1v15" stroke="#fff" strokeWidth="1.500" />
            <path fill="#fff" d="M2 2h6l1 2h6l-2 3 1 2H8L7 8H2z" />
          </svg>
          <svg viewBox="0 0 16 16" className="size-4" fill="none" stroke="#fff" strokeWidth="1.500" aria-hidden="true">
            <path d="M5.500 3.500h9v7h-9zM10 11v3M6.500 14h7M.8 1v4h3V1M2.300 5v9H5" />
          </svg>
          <svg viewBox="0 0 16 16" className="size-4" fill="none" stroke="#fff" strokeWidth="1.400" aria-hidden="true">
            <path fill="#fff" d="M1 6h2.500L7 2v12l-3.500-4H1z" />
            <path d="M9.500 5.500c1 1.500 1 3.500 0 5M11.500 4c2 2.500 2 5.500 0 8M13.500 2.500c3 3.500 3 7.500 0 11" />
          </svg>
        </div>
        <div className="ml-auto mr-4 text-center leading-[17px]">
          <div>11:19</div>
          <div>09/10/2018</div>
        </div>
      </div>
    </footer>
  );
}

export default function App() {
  return (
    <div className={uiFont + " flex h-screen flex-col overflow-hidden text-[12px]"}>
      <TabStrip />
      <AddressRow />
      <BookmarkBar />
      <div className={pageFont + " relative min-h-0 flex-1 overflow-hidden text-[13px]"}>
        <DimmedPage />
        <ClaimantDialog />
        <div className={uiFont + " pointer-events-none absolute bottom-[33px] right-[52px] w-[255px] whitespace-nowrap text-[#949494]"}>
          <p className="text-[19px] leading-6">Activate Windows</p>
          <p className="text-[14px] leading-[22px]">Go to PC settings to activate Windows.</p>
        </div>
      </div>
      <Taskbar />
    </div>
  );
}
